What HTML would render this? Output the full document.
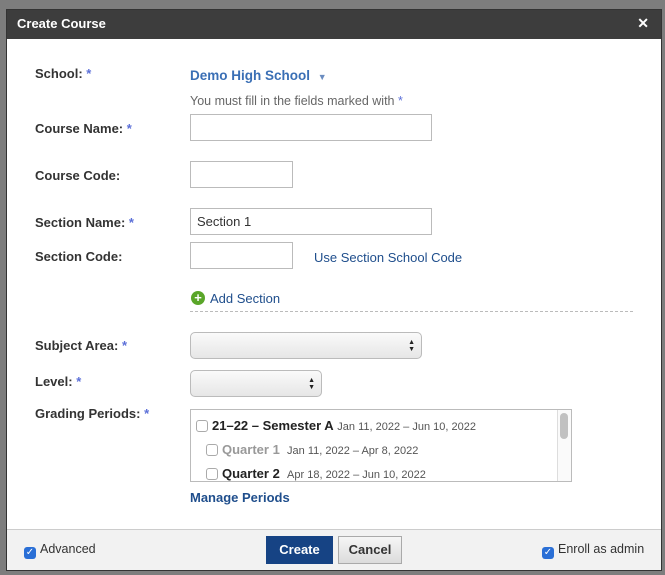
<!DOCTYPE html>
<html><head><style>
*{box-sizing:border-box;margin:0;padding:0}
body{width:665px;height:575px;background:#7d7d7d;font-family:"Liberation Sans",sans-serif;position:relative;overflow:hidden}
.dlg{position:absolute;left:6px;top:9px;width:656px;height:562px;background:#fff;border:1px solid #333}
.hd{position:absolute;left:0;top:0;width:100%;height:29px;background:#3d3d3d;color:#fff;font-weight:bold;font-size:13px;padding:6px 10px}
.x{position:absolute;right:12px;top:5px;font-size:14px;color:#fff;font-weight:bold}
.a{position:absolute;white-space:nowrap}
.lb{font-weight:bold;font-size:13px;color:#333;left:28px}
.st{color:#5b6fd8}
.in{position:absolute;border:1px solid #bbb;background:#fff;left:183px}
.sel{position:absolute;left:183px;border:1px solid #bbb;border-radius:5px;background:linear-gradient(#fafafa,#e6e6e6)}
.sel:after{content:"\25B2\A\25BC";white-space:pre;position:absolute;right:6px;top:6px;font-size:7px;line-height:7px;color:#222}
.cb{display:inline-block;width:12px;height:12px;border:1px solid #aaa;border-radius:3px;background:#fff;vertical-align:-2px;margin-right:4px}
.ck{display:inline-block;width:12px;height:12px;border-radius:3px;background:#2a6fd6;color:#fff;font-size:10px;line-height:12px;text-align:center;vertical-align:-2px;margin-right:4px}
.lk{color:#1f4e8c;font-size:13px}
</style></head><body>
<div class="dlg">
<div class="hd">Create Course<span class="x">✕</span></div>
<div class="a lb" style="top:56px">School: <span class="st">*</span></div>
<div class="a" style="left:183px;top:58px;font-size:13.5px;font-weight:bold;color:#3a6fb5">Demo High School <span style="font-size:9px;color:#6a8cc0;margin-left:4px">▼</span></div>
<div class="a" style="left:183px;top:84px;font-size:12.5px;color:#666">You must fill in the fields marked with <span class="st">*</span></div>
<div class="a lb" style="top:111px">Course Name: <span class="st">*</span></div>
<div class="in" style="top:104px;width:242px;height:27px"></div>
<div class="a lb" style="top:158px">Course Code:</div>
<div class="in" style="top:151px;width:103px;height:27px"></div>
<div class="a lb" style="top:205px">Section Name: <span class="st">*</span></div>
<div class="in" style="top:198px;width:242px;height:27px;font-size:13px;color:#333;padding:5px 6px">Section 1</div>
<div class="a lb" style="top:239px">Section Code:</div>
<div class="in" style="top:232px;width:103px;height:27px"></div>
<div class="a lk" style="left:307px;top:240px">Use Section School Code</div>
<div class="a" style="left:184px;top:281px;width:14px;height:14px;border-radius:50%;background:#5aa629;color:#fff;font-size:13px;font-weight:bold;line-height:14px;text-align:center">+</div>
<div class="a lk" style="left:203px;top:281px">Add Section</div>
<div class="a" style="left:183px;top:301px;width:443px;border-top:1px dashed #bbb"></div>
<div class="a lb" style="top:328px">Subject Area: <span class="st">*</span></div>
<div class="sel" style="top:322px;width:232px;height:27px"></div>
<div class="a lb" style="top:364px">Level: <span class="st">*</span></div>
<div class="sel" style="top:360px;width:132px;height:27px"></div>
<div class="a lb" style="top:396px">Grading Periods: <span class="st">*</span></div>
<div class="a" style="left:183px;top:399px;width:382px;height:73px;border:1px solid #bbb;overflow:hidden;font-size:13px">
<div style="position:absolute;right:0;top:0;width:14px;height:100%;border-left:1px solid #ddd;background:#fafafa"><div style="margin:3px 2px;width:8px;height:26px;border-radius:4px;background:#c1c1c1"></div></div>
<div class="a" style="left:5px;top:8px"><span class="cb"></span><b style="color:#222">21–22 – Semester A</b> <span style="font-size:11px;color:#555">Jan 11, 2022 – Jun 10, 2022</span></div>
<div class="a" style="left:15px;top:32px"><span class="cb"></span><b style="color:#999">Quarter 1</b> &nbsp;<span style="font-size:11px;color:#555">Jan 11, 2022 – Apr 8, 2022</span></div>
<div class="a" style="left:15px;top:56px"><span class="cb"></span><b style="color:#222">Quarter 2</b> &nbsp;<span style="font-size:11px;color:#555">Apr 18, 2022 – Jun 10, 2022</span></div>
</div>
<div class="a" style="left:183px;top:480px;font-size:13px;font-weight:bold;color:#1f4e8c">Manage Periods</div>
<div class="a" style="left:0;top:519px;width:654px;height:41px;background:#f2f2f2;border-top:1px solid #ccc"></div>
<div class="a" style="left:17px;top:532px;font-size:12.5px;color:#333"><span class="ck">✓</span>Advanced</div>
<div class="a" style="left:259px;top:526px;width:67px;height:28px;background:#164384;color:#fff;font-weight:bold;font-size:13px;text-align:center;line-height:28px">Create</div>
<div class="a" style="left:331px;top:526px;width:64px;height:28px;background:linear-gradient(#f6f6f6,#dcdcdc);border:1px solid #aaa;color:#333;font-weight:bold;font-size:13px;text-align:center;line-height:26px">Cancel</div>
<div class="a" style="left:535px;top:532px;font-size:12.5px;color:#333"><span class="ck">✓</span>Enroll as admin</div>
</div>
</body></html>
